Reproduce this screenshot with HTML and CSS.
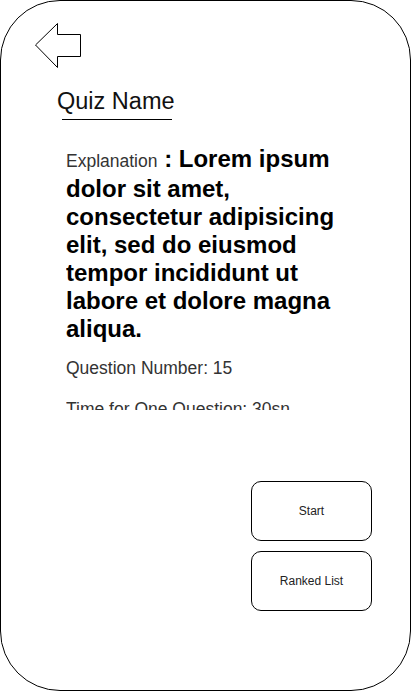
FILE: index.html
```html
<!DOCTYPE html>
<html>
<head>
<meta charset="utf-8">
<link rel="stylesheet" href="styles.css">
</head>
<body>
<div class="phone">
  <svg class="back" width="48" height="48" viewBox="0 0 48 48">
    <polygon points="1.5,24 23.5,2.5 23.5,13.5 46.5,13.5 46.5,35.5 23.5,35.5 23.5,46.5" fill="#fff" stroke="#000" stroke-width="1"/>
  </svg>
  <div class="title">Quiz Name</div>
  <div class="title-rule"></div>
  <div class="info">
    <p class="explain"><span class="label">Explanation</span> <b>: Lorem ipsum dolor sit amet, consectetur adipisicing elit, sed do eiusmod tempor incididunt ut labore et dolore magna aliqua.</b></p>
    <p class="meta">Question Number: 15</p>
    <p class="meta">Time for One Question: 30sn</p>
  </div>
  <div class="actions">
    <div class="btn">Start</div>
    <div class="btn">Ranked List</div>
  </div>
</div>
</body>
</html>
```

FILE: styles.css
```css
html, body {
  margin: 0;
  padding: 0;
  background: #fff;
}
body {
  font-family: "Liberation Sans", Arial, sans-serif;
}
.phone {
  box-sizing: border-box;
  width: 411px;
  height: 691px;
  border: 1px solid #000;
  border-radius: 60px;
  overflow: hidden;
  display: flex;
  flex-direction: column;
}
.back {
  display: block;
  margin: 20px 0 0 33px;
}
.title {
  margin: 19px 0 0 56px;
  font-size: 23.5px;
  line-height: 26px;
  color: #111;
}
.title-rule {
  margin: 5px 0 0 61px;
  width: 110px;
  border-top: 1px solid #000;
}
.info {
  margin: 25px 0 0 65px;
  width: 282px;
  height: 265px;
  overflow: hidden;
}
.explain {
  margin: 0;
  line-height: 28px;
  font-size: 24px;
  color: #000;
}
.explain .label {
  font-size: 17.5px;
  color: #333;
}
.explain b {
  font-weight: bold;
}
.meta {
  margin: 15px 0 0 0;
  font-size: 17.5px;
  line-height: 20px;
  color: #333;
}
.meta + .meta {
  margin-top: 21px;
}
.actions {
  margin-top: 71px;
  padding-right: 38px;
  display: flex;
  flex-direction: column;
  align-items: flex-end;
  gap: 10px;
}
.btn {
  box-sizing: border-box;
  width: 121px;
  height: 60px;
  border: 1px solid #000;
  border-radius: 10px;
  display: flex;
  align-items: center;
  justify-content: center;
  font-size: 12px;
  color: #222;
}
```
